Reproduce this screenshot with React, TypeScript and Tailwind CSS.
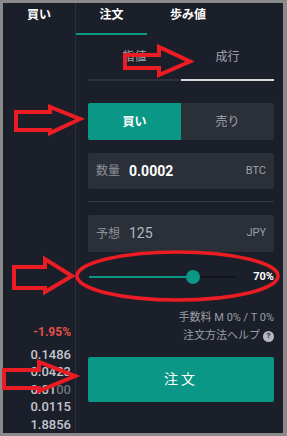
import React from 'react';

const font = "font-['Roboto','Noto_Sans_CJK_JP',sans-serif]";

const prices = [
  { main: '0.1486', dim: '' },
  { main: '0.0423', dim: '' },
  { main: '0.01', dim: '00' },
  { main: '0.0115', dim: '' },
  { main: '1.8856', dim: '' },
];

function Annotations() {
  const red = '#ec1c24';
  return (
    <svg className="absolute inset-0 pointer-events-none" width={287} height={436} viewBox="0 0 287 436">
      <g fill="none" stroke={red} strokeWidth={4} strokeLinejoin="miter" strokeMiterlimit={4}>
        <polygon points="125,55 159,55 159,47 190,61.5 159,75 159,68 125,68" />
        <polygon points="16,112 50,112 50,107 80,119 50,133 50,130 16,130" />
        <polygon points="14,267 45,267 45,259 72,276 45,292 45,288 14,288" />
        <polygon points="4,370 39,370 39,362 75,376 39,391 39,388 4,388" />
        <ellipse cx={177.5} cy={276} rx={100.5} ry={24} strokeWidth={3.5} />
      </g>
    </svg>
  );
}

export default function App() {
  return (
    <div className={`relative w-[287px] h-[436px] bg-[#8a8a8a] pt-[3px] pl-[3px] pr-[4px] pb-[3px] ${font}`}>
      <div className="flex h-full bg-[#1b1f29]">
        {/* left column */}
        <div className="w-[72px] flex flex-col">
          <div className="h-[32px] pt-[2px] text-center text-[12px] leading-[20px] font-bold text-white">買い</div>
          <div className="mt-auto flex flex-col items-end pr-[4px]">
            <div className="h-[16px] leading-[16px] text-[12px] font-bold text-[#e2504a] mb-[6px]">-1.95%</div>
            {prices.map((p) => (
              <div key={p.main + p.dim} className="h-[17.5px] leading-[17.5px] text-[13px] font-medium text-[#c3c6cd]">
                {p.main}
                {p.dim && <span className="text-[#6f737c]">{p.dim}</span>}
              </div>
            ))}
          </div>
        </div>

        {/* right panel */}
        <div className="flex-1 flex flex-col border-l border-[#2c303a]">
          <div className="h-[32px] flex">
            <div className="w-[71px] pt-[2px] text-center text-[12px] leading-[20px] font-bold text-white border-b-2 border-[#0b9785]">注文</div>
            <div className="w-[82px] pt-[2px] text-center text-[12px] leading-[20px] font-bold text-white">歩み値</div>
          </div>

          <div className="pl-[12px] pr-[9px]">
            <div className="flex h-[46px]">
              <div className="flex-1 flex items-center justify-center text-[12px] text-[#a3a7b0] border-b-2 border-[#2e323b]">指値</div>
              <div className="flex-1 flex items-center justify-center text-[12px] text-[#a3a7b0] border-b-2 border-[#d9d9d9]">成行</div>
            </div>

            <div className="mt-[22px] h-[37px] flex rounded-[2px] overflow-hidden">
              <div className="w-[93px] flex items-center justify-center bg-[#0b9785] text-[12px] font-bold text-white">買い</div>
              <div className="flex-1 flex items-center justify-center bg-[#2b2f38] text-[12px] text-[#a3a7b0]">売り</div>
            </div>

            <div className="mt-[13px] h-[36px] flex items-center rounded-[2px] bg-[#2b2f38] px-[8px]">
              <span className="text-[12px] text-[#8c9099] w-[33px]">数量</span>
              <span className="text-[14px] font-bold text-white">0.0002</span>
              <span className="ml-auto text-[11px] text-[#9ea2ab]">BTC</span>
            </div>

            <div className="mt-[12px] h-px bg-[#363a43]" />

            <div className="mt-[13px] h-[37px] flex items-center rounded-[2px] bg-[#2b2f38] px-[8px]">
              <span className="text-[12px] text-[#8c9099] w-[33px]">予想</span>
              <span className="text-[14px] text-[#b3b7bf]">125</span>
              <span className="ml-auto text-[11px] text-[#9ea2ab]">JPY</span>
            </div>

            <div className="mt-[17px] h-[16px] flex items-center">
              <div className="relative ml-[1px] w-[148px] h-[2px] bg-[#12151c]">
                <div className="absolute left-0 top-0 h-[2px] w-[103px] bg-[#0b9785]" />
                <div className="absolute left-[97px] top-[-6px] w-[14px] h-[14px] rounded-full bg-[#0b9785]" />
              </div>
              <span className="ml-auto text-[11px] font-bold text-white">70%</span>
            </div>

            <div className="mt-[26px] h-[14px] leading-[14px] text-right text-[11px] text-[#9a9ea6]">手数料 M 0% / T 0%</div>
            <div className="mt-[4px] h-[14px] flex items-center justify-end gap-[3px] text-[11px] text-[#9a9ea6]">
              <span>注文方法ヘルプ</span>
              <span className="w-[11px] h-[11px] rounded-full bg-[#b5b8be] flex items-center justify-center text-[8px] font-bold text-[#1b1f29] leading-none">?</span>
            </div>

            <button className="mt-[14px] w-full h-[45px] rounded-[2px] bg-[#0b9785] text-white text-[14px] tracking-[3px] flex items-center justify-center">
              注文
            </button>
          </div>
        </div>
      </div>
      <Annotations />
    </div>
  );
}
